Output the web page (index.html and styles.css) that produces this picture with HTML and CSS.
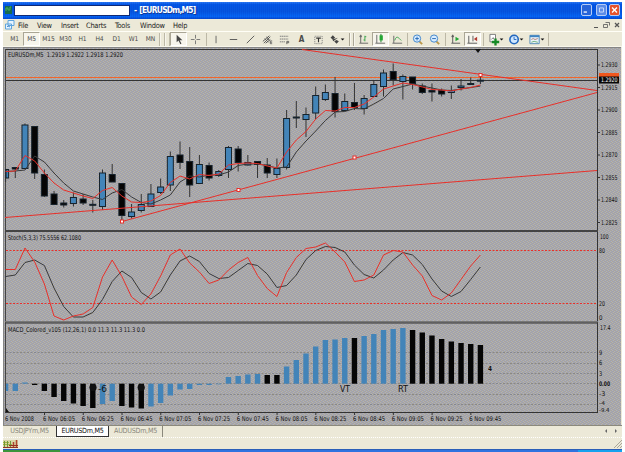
FILE: index.html
```html
<!DOCTYPE html>
<html lang="en">
<head>
<meta charset="utf-8">
<title>EURUSDm,M5</title>
<link rel="stylesheet" href="styles.css">
</head>
<body>
<div class="window">
  <header class="titlebar">
    <svg class="app-icon" viewBox="0 0 8 10"><path d="M0 1h7v8H0z" fill="#176b4e"/><path d="M1 6V3h2v2h2V2h1" stroke="#48b25d" fill="none"/></svg>
    <span class="account"></span>
    <span class="title">- [EURUSDm,M5]</span>
    <span class="controls">
      <i class="ctl"><svg viewBox="0 0 11 11"><path d="M2 8h4" stroke="#fff" stroke-width="1.6"/></svg></i>
      <i class="ctl light"><svg viewBox="0 0 11 11"><path d="M3 3h5v5H3z" fill="none" stroke="#dce8ff"/></svg></i>
      <i class="ctl close"><svg viewBox="0 0 11 11"><path d="M2.500 2.500l6 6M8.500 2.500l-6 6" stroke="#fff" stroke-width="1.7"/></svg></i>
    </span>
  </header>
  <nav class="menu">
    <svg class="mdi-icon" viewBox="0 0 10 10"><path d="M3 .5h6v5H3zM.5 4h6v5h-6z" fill="#e8f4ff" stroke="#5fa4dc"/><path d="M2 7l1-1 2 1" stroke="#4a8fd0" fill="none"/></svg>
    <span class="m-file">File</span><span class="m-view">View</span><span class="m-insert">Insert</span><span class="m-charts">Charts</span><span class="m-tools">Tools</span><span class="m-window">Window</span><span class="m-help">Help</span>
    <svg class="mdi-controls" viewBox="0 0 30 10"><g fill="none" stroke="#555"><path d="M2 7.5h4"/><path d="M13.500 2.500h4v3M11.500 4.500h4v3h-4z" stroke-width=".8"/><path d="M23 3l4 4M27 3l-4 4" stroke-width="1.300"/></g></svg>
  </nav>
  <div class="toolbar">
    <span class="b">M1</span><span class="b on">M5</span><span class="b">M15</span><span class="b">M30</span><span class="b">H1</span><span class="b">H4</span><span class="b">D1</span><span class="b">W1</span><span class="b">MN</span>
    <i class="sep triple"></i>
    <span class="b on"><svg viewBox="0 0 16 14"><path d="M6 2v8l2-2 2 4 1.200-.6-2-3.600h3z" fill="#444"/></svg></span>
    <span class="b"><svg viewBox="0 0 16 14"><path d="M8 2v4M8 8v4M3 7h4M9 7h4" stroke="#666" stroke-width=".9"/></svg></span>
    <i class="sep s4"></i>
    <span class="b"><svg viewBox="0 0 16 14"><path d="M7.500 3v8" stroke="#555" stroke-width=".9"/></svg></span>
    <span class="b"><svg viewBox="0 0 16 14"><path d="M4 7h8" stroke="#555"/></svg></span>
    <span class="b"><svg viewBox="0 0 16 14"><path d="M4 11l8-8" stroke="#555"/></svg></span>
    <span class="b"><svg viewBox="0 0 16 14"><g stroke="#555" fill="none"><path d="M3 9l7-6M4 11l7-7M6 11l5-4M5 6l4 4M7 4l3 4"/><path d="M13 8.500h-2v3h2M11 10h2" stroke-width=".8"/></g></svg></span>
    <span class="b"><svg viewBox="0 0 16 14"><g stroke="#777" fill="none"><path d="M3 3.500h9M3 6.500h9M3 9.500h6" stroke-dasharray="1.500 .5"/><path d="M10.500 12V9h2v1.500h-2" stroke="#444" stroke-width=".8"/></g></svg></span>
    <span class="b glyph">A</span>
    <span class="b"><svg viewBox="0 0 16 14"><path d="M4 3.500h8v8H4z" fill="none" stroke="#777" stroke-dasharray="1 1"/><path d="M5.500 5.500h5M8 5.500V10" stroke="#333" stroke-width="1.200"/></svg></span>
    <span class="b w20"><svg viewBox="0 0 20 14"><path d="M3 5l2.500-2.500L8 5 5.500 7zM7 9l2.500 2.500L12 9 9.500 7.500zM5 7l1 2 5-4" fill="#444"/><path d="M14 6h4l-2 2z" fill="#111"/></svg></span>
    <i class="sep double"></i>
    <span class="b"><svg viewBox="0 0 16 14"><path d="M5 3v8h8M3.500 11H5M5 2l-1 2h2z" stroke="#666" fill="none"/><path d="M9.500 3v6M8 7.500h1.500M9.500 4H11" stroke="#37a24a"/></svg></span>
    <span class="b on"><svg viewBox="0 0 16 14"><path d="M4 2v9h9M2.500 11H4" stroke="#666" fill="none"/><path d="M8.500 1v9" stroke="#177b25"/><path d="M7 2.500h3.500v5.500H7z" fill="#24a634"/></svg></span>
    <span class="b"><svg viewBox="0 0 16 14"><path d="M4 3v8h9M2.500 11H4" stroke="#666" fill="none"/><path d="M5 8c2-6 4-3 7 0" stroke="#37a24a" fill="none"/></svg></span>
    <i class="sep s3"></i>
    <span class="b"><svg viewBox="0 0 16 14"><path d="M10 9l3 3" stroke="#b9974a" stroke-width="2"/><circle cx="7.500" cy="6" r="3.900" fill="#d7ecff" stroke="#3b82c8"/><path d="M5.500 6h4M7.500 4v4" stroke="#2468b4"/></svg></span>
    <span class="b"><svg viewBox="0 0 16 14"><path d="M10 9l3 3" stroke="#b9974a" stroke-width="2"/><circle cx="7.500" cy="6" r="3.900" fill="#d7ecff" stroke="#3b82c8"/><path d="M5.500 6h4" stroke="#2468b4"/></svg></span>
    <i class="sep s4"></i>
    <span class="b"><svg viewBox="0 0 16 14"><path d="M5 3v8h8M3.500 11H5M5 2l-1 2h2z" stroke="#555" fill="none"/><path d="M8 4l4 2.500L8 9z" fill="#24a634"/></svg></span>
    <span class="b on"><svg viewBox="0 0 16 14"><path d="M4 3v8h9M2.500 11H4M8.500 3v6" stroke="#555" fill="none"/><path d="M13 4L9.500 6.500 13 9z" fill="#b33b32"/></svg></span>
    <i class="sep s5"></i>
    <span class="b w19"><svg viewBox="0 0 19 14"><path d="M3.500 1.500h6v8h-6z" fill="#fff" stroke="#777"/><path d="M5 7l2-2 1 2" stroke="#777" fill="none"/><path d="M9.500 6v7.500M5.500 9.700h8" stroke="#168a25" stroke-width="2.500"/><path d="M14 6h4l-2 2z" fill="#111"/></svg></span>
    <span class="b w20"><svg viewBox="0 0 20 14"><circle cx="9" cy="7" r="4.500" fill="#cfe7ff" stroke="#2367bd" stroke-width="1.700"/><path d="M9 4v3h2.500" stroke="#2367bd" fill="none"/><path d="M15 6h4l-2 2z" fill="#111"/></svg></span>
    <span class="b w21"><svg viewBox="0 0 21 14"><path d="M4.500 2.500h10v9h-10z" fill="#e9f3fa" stroke="#5088b7"/><path d="M4.500 3.500h10" stroke="#3e83c1" stroke-width="2"/><path d="M6 7l2-1 2 1 3-1" stroke="#a66255" fill="none" stroke-width=".8"/><path d="M6 10l3-1 4 1" stroke="#4a9b57" fill="none" stroke-width=".8"/><path d="M16 6h4l-2 2z" fill="#111"/></svg></span>
    <i class="sep s4"></i>
  </div>
  <svg class="chart" id="chart" viewBox="3 47 619 378" width="619" height="378">
    <defs>
      <pattern id="dither" width="4" height="4" patternUnits="userSpaceOnUse">
        <rect width="4" height="4" fill="#a8a49f"/>
        <path d="M0 0h1v1H0zM2 1h1v1H2zM1 2h1v1H1zM3 3h1v1H3z" fill="#a0a5bc"/>
        <path d="M1 0h1v1H1zM3 1h1v1H3zM0 2h1v1H0zM2 3h1v1H2z" fill="#b3b3b0"/>
      </pattern>
    </defs>
    <rect x="3" y="47" width="618" height="378" fill="url(#dither)"/>
    <path d="M3 47.500H621M3.500 47V425" stroke="#858585"/>
  </svg>
  <div class="tabs"><span class="tab t1">USDJPYm,M5</span><span class="tab active">EURUSDm,M5</span><span class="tab t3">AUDUSDm,M5</span><svg class="tab-nav" viewBox="0 0 16 8"><path d="M4 2L2 4l2 2zM12 2l2 2-2 2z" fill="#666"/></svg></div>
  <footer class="status"><svg class="signal" viewBox="0 0 15 8"><path d="M0 0h15v8H0z" fill="#d9d6a4"/><path d="M0 2.500h6M0 4.500h9" stroke="#a8b33c"/><path d="M1.500 1v7M4.500 1v7M7.500 1v7" stroke="#6f9a3b"/><path d="M10.500 2v6M13.500 0v8" stroke="#b0452f" stroke-width="1.500"/><path d="M0 7.500h15M6 5.500h9" stroke="#943323"/></svg><svg class="grip" viewBox="0 0 9 9"><path d="M1 9l8-8M4 9l5-5M7 9l2-2" stroke="#aaa79a"/></svg></footer>
  <div class="taskbar"><i class="start"></i><i class="tasks"></i><i class="tray"></i></div>
</div>
<script src="chart.js"></script>
</body>
</html>
```
FILE: styles.css
```css
* { box-sizing: border-box; }
body { margin: 0; background: #fff; overflow: hidden; font-family: "DejaVu Sans Condensed", "DejaVu Sans", sans-serif; }
.window { width: 619px; height: 450px; margin: 2px 0 0 3px; display: flex; flex-direction: column; background: #ece9d8; }
svg { display: block; }
.titlebar { height: 17px; flex: none; display: flex; align-items: center; padding: 0 2px 1px; background: repeating-linear-gradient(90deg, rgba(0,40,190,.16) 0 1px, transparent 1px 2px), linear-gradient(#2b7bf4 0, #0358e6 15%, #0556df 55%, #0567f5 85%, #0748ce); }
.app-icon { width: 8px; height: 10px; }
.account { width: 116px; height: 11px; margin-left: 1px; background: #fff; border: 1px solid #102a75; }
.title { margin-left: 4px; color: #fff; font: bold 8.4px "DejaVu Sans Condensed", sans-serif; white-space: nowrap; letter-spacing: -.75px; word-spacing: 1px; text-shadow: 1px 1px #123a98; }
.controls { margin-left: auto; display: flex; gap: 2px; }
.ctl { width: 11px; height: 12px; border: 1px solid #b6ccf5; border-radius: 2px; background: #2864d8; }
.ctl svg { width: 9px; height: 10px; }
.ctl.light { background: #5b8ce8; }
.ctl.close { background: #e6532c; }
.ctl:first-child { margin-right: 2px; }
.menu { height: 12px; flex: none; display: flex; align-items: center; padding-left: 2px; font-size: 7.4px; line-height: 11px; color: #222; letter-spacing: -.25px; }
.mdi-icon { width: 10px; height: 10px; margin-right: 3px; }
.m-file { width: 19px; } .m-view { width: 24px; } .m-insert { width: 25px; } .m-charts { width: 29px; } .m-tools { width: 25px; } .m-window { width: 33px; }
.mdi-controls { width: 30px; height: 10px; margin-left: auto; }
.toolbar { height: 16px; flex: none; display: flex; align-items: center; padding-left: 3px; border-top: 1px solid #fffef6; border-bottom: 1px solid #f8f6ea; font-size: 6.6px; color: #4a4a4a; }
.b { width: 17px; height: 14px; flex: none; display: flex; align-items: center; justify-content: center; letter-spacing: -.1px; }
.b svg { width: 100%; height: 13px; }
.b.on { background: #f7f5ec; border: 1px solid #aaa695; border-right-color: #fff; border-bottom-color: #fff; }
.b.glyph { font-size: 8px; font-weight: bold; }
.b.w19 { width: 19px; } .b.w20 { width: 20px; } .b.w21 { width: 21px; }
.sep { height: 13px; flex: none; background: linear-gradient(#bcb8a6, #bcb8a6) center / 1px 100% no-repeat; }
.s3 { width: 3px; } .s4 { width: 4px; } .s5 { width: 5px; }
.triple { width: 11px; background: repeating-linear-gradient(90deg, #bcb8a6 0 1px, #f8f6ee 1px 2px, transparent 2px 5px); }
.double { width: 8px; background: repeating-linear-gradient(90deg, transparent 0 2px, #aaa695 2px 3px, #f8f6ee 3px 4px); }
.chart { flex: none; font-family: "DejaVu Sans Condensed", "DejaVu Sans", sans-serif; }
.tabs { height: 12px; flex: none; display: flex; border-top: 1px solid #8b897c; font-size: 7.1px; line-height: 10px; letter-spacing: -.25px; color: #8a887c; }
.tab { height: 11px; text-align: center; white-space: nowrap; }
.t1 { width: 53px; }
.tab.active { width: 53px; background: #fff; color: #111; border: 1px solid #333; border-top: 0; }
.t3 { width: 54px; border-right: 1px solid #8a887c; }
.tab-nav { width: 16px; height: 8px; margin: 1px 3px 0 auto; }
.status { height: 12px; flex: none; display: flex; align-items: center; justify-content: space-between; border-top: 1px dotted #fff; }
.signal { width: 15px; height: 8px; }
.grip { width: 9px; height: 9px; }
.taskbar { height: 3px; flex: none; display: flex; border-top: 1px solid #2b5fb8; }
.start { width: 57px; background: #3b943c; }
.tasks { flex: 1; background: #2f73e0; }
.tray { width: 44px; background: #17a2ee; }
```
FILE: chart.js
```js
const svg = document.getElementById('chart');
const NS = 'http://www.w3.org/2000/svg';
const BLUE = '#4384b8', RED = '#e8302a', DARK = '#393939';
const X = i => 5.6 + 9.69 * i;

function add(tag, attrs, text) {
  const el = document.createElementNS(NS, tag);
  for (const k in attrs) el.setAttribute(k, attrs[k]);
  if (text !== undefined) el.textContent = text;
  svg.appendChild(el);
}
function label(x, y, text, len, size = 6.5, fill = '#111', weight = 'normal') {
  const a = { x, y, 'font-size': size, fill, 'font-weight': weight };
  if (len) { a.textLength = len; a.lengthAdjust = 'spacingAndGlyphs'; }
  add('text', a, text);
}
function line(x1, y1, x2, y2, stroke, w = 1, dash = 'none') {
  add('line', { x1, y1, x2, y2, stroke, 'stroke-width': w, 'stroke-dasharray': dash });
}
function curve(ys, stroke) {
  add('polyline', { points: ys.map((y, i) => X(i).toFixed(1) + ',' + y).join(' '), fill: 'none', stroke, 'stroke-width': 1 });
}
function rect(x, y, width, height, fill, stroke = 'none') {
  add('rect', { x, y, width, height, fill, stroke });
}

// pane frames
line(5, 49.5, 598, 49.5, '#333');
line(5.5, 49, 5.5, 413, '#444');
line(597.5, 49, 597.5, 413, '#333');
rect(5, 230, 593, 2, '#444');
rect(5, 321, 593, 1.5, '#777');
rect(5, 322.5, 593, 1, '#333');
line(5, 412.5, 598, 412.5, '#333');

// horizontal levels
rect(6, 77, 591, 1, '#f0662c');
rect(6, 80, 591, 1, '#333');
for (const y of [250.5, 303.5]) line(6, y, 597, y, RED, 1, '2 1.5');
for (const y of [352.5, 363.5, 373.5, 383.5, 394.5, 404.5]) line(6, y, 597, y, '#888', 1, '2 1.5');

// candles: type, high, top, bottom, low
const candles = [
['b',169,169.5,178,182],['k',167,167.5,169,178],['b',123.5,125,168.5,169],['k',126,126.5,173,179],['k',169.5,174.5,196,197],
['k',191,194,204.5,205],['k',200,203,205,207.5],['b',192.5,197.5,203.5,206.5],['k',194,199,203,205],['k',200,204.3,205.3,212.5],
['b',169.5,173,206.5,210],['k',164,174.5,182,182],['k',183,183.5,215.5,220],['b',204,212,216.5,218.5],['b',194,204.5,210.5,212.5],
['b',184,194,206.5,207],['b',178.5,187,192.5,194],['b',151.5,156.5,185,191],['k',141.5,155,162.5,169],['k',147,161.5,185,197],
['b',155,164.5,183.5,184],['k',162.5,165.5,178,180.5],['b',170,171.5,175.5,177],['b',146,147.5,169.5,178],['k',146,149,162.5,171.5],
['b',155,162.5,165,165.5],['k',161,161.5,164.5,178],['k',158,165,173,178],['b',158.5,168.5,174.5,178],['b',110,118.5,167.5,169.5],
['k',101,117,118,128],['b',107.5,114.5,119.5,137],['b',86.5,95.5,113,119],['b',84.5,92.5,99.5,101],['k',77,93.5,111.5,117.5],
['b',93.5,101.5,110.5,111],['k',83,102.5,107.5,110],['b',95,98.5,108.5,114.5],['b',80.5,84.5,96.5,97],['b',69.5,73,86.5,96.5],
['k',63.5,71.5,79.5,85.5],['b',74.5,76.5,81.5,99.5],['k',77,77,83.5,89.5],['k',83.5,86,92.5,94],['k',83.5,90.5,92,101.5],
['k',88.5,90.5,94,96.5],['b',85.5,90.5,92.5,99],['b',79,86,87.5,90.5],['b',77.5,83.5,84.5,85],['b',75,80.2,81.2,84]];
candles.forEach(([t, h, a, b, l], i) => {
  const x = X(i);
  line(x, h, x, l, '#333', 1);
  const left = Math.max(6, x - 3), right = x + 3;
  rect(left, a, right - left, b - a, t === 'b' ? BLUE : '#050505', '#17232c');
});

// moving averages
curve([171.5,171,170,156,162,173,183,191,194,197,199.5,193,189.5,197,202.5,204,200,195,182,176,177,175,175,172,165.5,164,164,165.5,168,167,152,141,131,120.5,112,111.5,108.5,109,104,98.5,89,86.5,84,86,88,90,90.5,89,87.5,86], DARK);
curve([171.5,171,155.5,161,173,183,190,193,196,198.5,190.5,187.5,196,202,202.5,201,195.5,182.5,176,179,174.5,175.5,174,165,163.5,163,163.5,166,168,152,140,131.5,119,110.5,111,107.5,107.5,104,97,89,86,83,84.5,87,89.5,90,91,89,87.5,85], RED);

// trend lines and their handles
line(302, 49.5, 597, 90.5, RED);
line(122, 221.5, 597, 92.5, RED);
line(5, 217.5, 597, 170.5, RED);
for (const [x, y] of [[122, 221.5], [238.5, 190], [354.5, 157.5], [480.5, 75]]) rect(x - 1.5, y - 1.5, 3, 3, '#fff', RED);
add('path', { d: 'M475 49h6l-3 4z', fill: '#111' });
add('path', { d: 'M6 408l3 4H6z', fill: '#111' });

// stochastic
curve([276.5,275,262.5,260,265.5,288,306.5,317,317,312.5,299.5,281.5,271,277.5,292.5,299,292,275,261,256,261.5,273.5,278.5,277.5,270.5,263.5,265.5,274,287.5,285.5,275,259.5,250.5,246.5,247.5,252,265,274.5,278,270,260,252.5,255,264.5,279,291,296.5,291.5,279.5,267], DARK);
curve([269.5,269.5,248,262,284,316,320,316,314,307.5,277,260,276.5,297,304.5,294,276,255,249,263,272,283.5,280,270,262.5,257.5,275.5,288.5,296.5,272.5,257.5,248.5,247,243,252,262,281.5,280,275,255,250.5,252,265,276,295.5,300,293,279.5,266,255], RED);

// MACD histogram
const macd = [391,391,382.5,385,391,397,401,403.5,406,408,404,401,406,407.5,408.5,406.5,403,395.5,389.5,389,385,385,384.3,377,376,374.5,374,375,375,366.5,360,353.5,346.5,340,339.5,338,338,336,334,330,329,328,330,332.5,335.5,339,341.5,343,344,345];
const dark = new Set([3,4,5,6,7,8,9,12,13,14,27,28,36,42,43,44,45,46,47,48,49]);
macd.forEach((y, i) => {
  const z = 383.7, left = Math.max(6, X(i) - 2.7);
  rect(left, Math.min(y, z), X(i) + 2.7 - left, Math.abs(y - z), dark.has(i) ? '#050505' : BLUE);
});
for (const x of [93, 141.2]) add('circle', { cx: x, cy: 387.5, r: 3.6, fill: '#111' });

// captions
label(8, 57, 'EURUSDm,M5\u00a0 1.2919 1.2922 1.2918 1.2920', 115);
label(8, 240.3, 'Stoch(5,3,3) 75.5556 62.1080', 73);
label(8, 332.3, 'MACD_Colored_v105 (12,26,1) 0.0 11.3 11.3 11.3 0.0', 137);
label(98, 392, '-6', 9, 8);
label(340, 391.5, 'VT', 10, 8);
label(398, 391.5, 'RT', 10, 8);
label(488, 371, '4', 4, 7, '#111', 'bold');

// price scale
['1.2930','1.2915','1.2900','1.2885','1.2870','1.2855','1.2840','1.2825'].forEach((t, i) => {
  const y = 65 + i * 22.5;
  line(598, y, 600, y, '#333');
  label(601, y + 2.3, t, 16.5);
});
rect(599, 73, 20, 4, '#f0571d');
rect(599, 76.5, 20, 7, '#080808');
label(601, 82.3, '1.2920', 16.5, 6.2, '#fff');
label(600, 238.5, '100', 8.5);
label(599, 252.7, '80', 6);
label(599, 305.7, '20', 6);
label(599, 320, '0', 3.5);
label(600, 330, '17.4', 10.5);
for (const [t, y] of [['9', 352.5], ['6', 363], ['3', 373.5], ['-3', 394]]) label(599, y + 2.3, t, t.length * 3.2);
label(599, 405.3, '-4', 6, 5.2);
label(599, 385.8, '0.00', 11, 6.4, '#111', 'bold');
label(599, 411.7, '-9.4', 10.5, 5.4);

// time scale
label(5, 421, '6 Nov 2008', 29);
['06:05','06:25','06:45','07:05','07:25','07:45','08:05','08:25','08:45','09:05','09:25','09:45'].forEach((t, i) => {
  const x = 43 + i * 38.76;
  line(x + 1.5, 413, x + 1.5, 415, '#333');
  label(x, 421, '6 Nov ' + t, 32);
});
```
